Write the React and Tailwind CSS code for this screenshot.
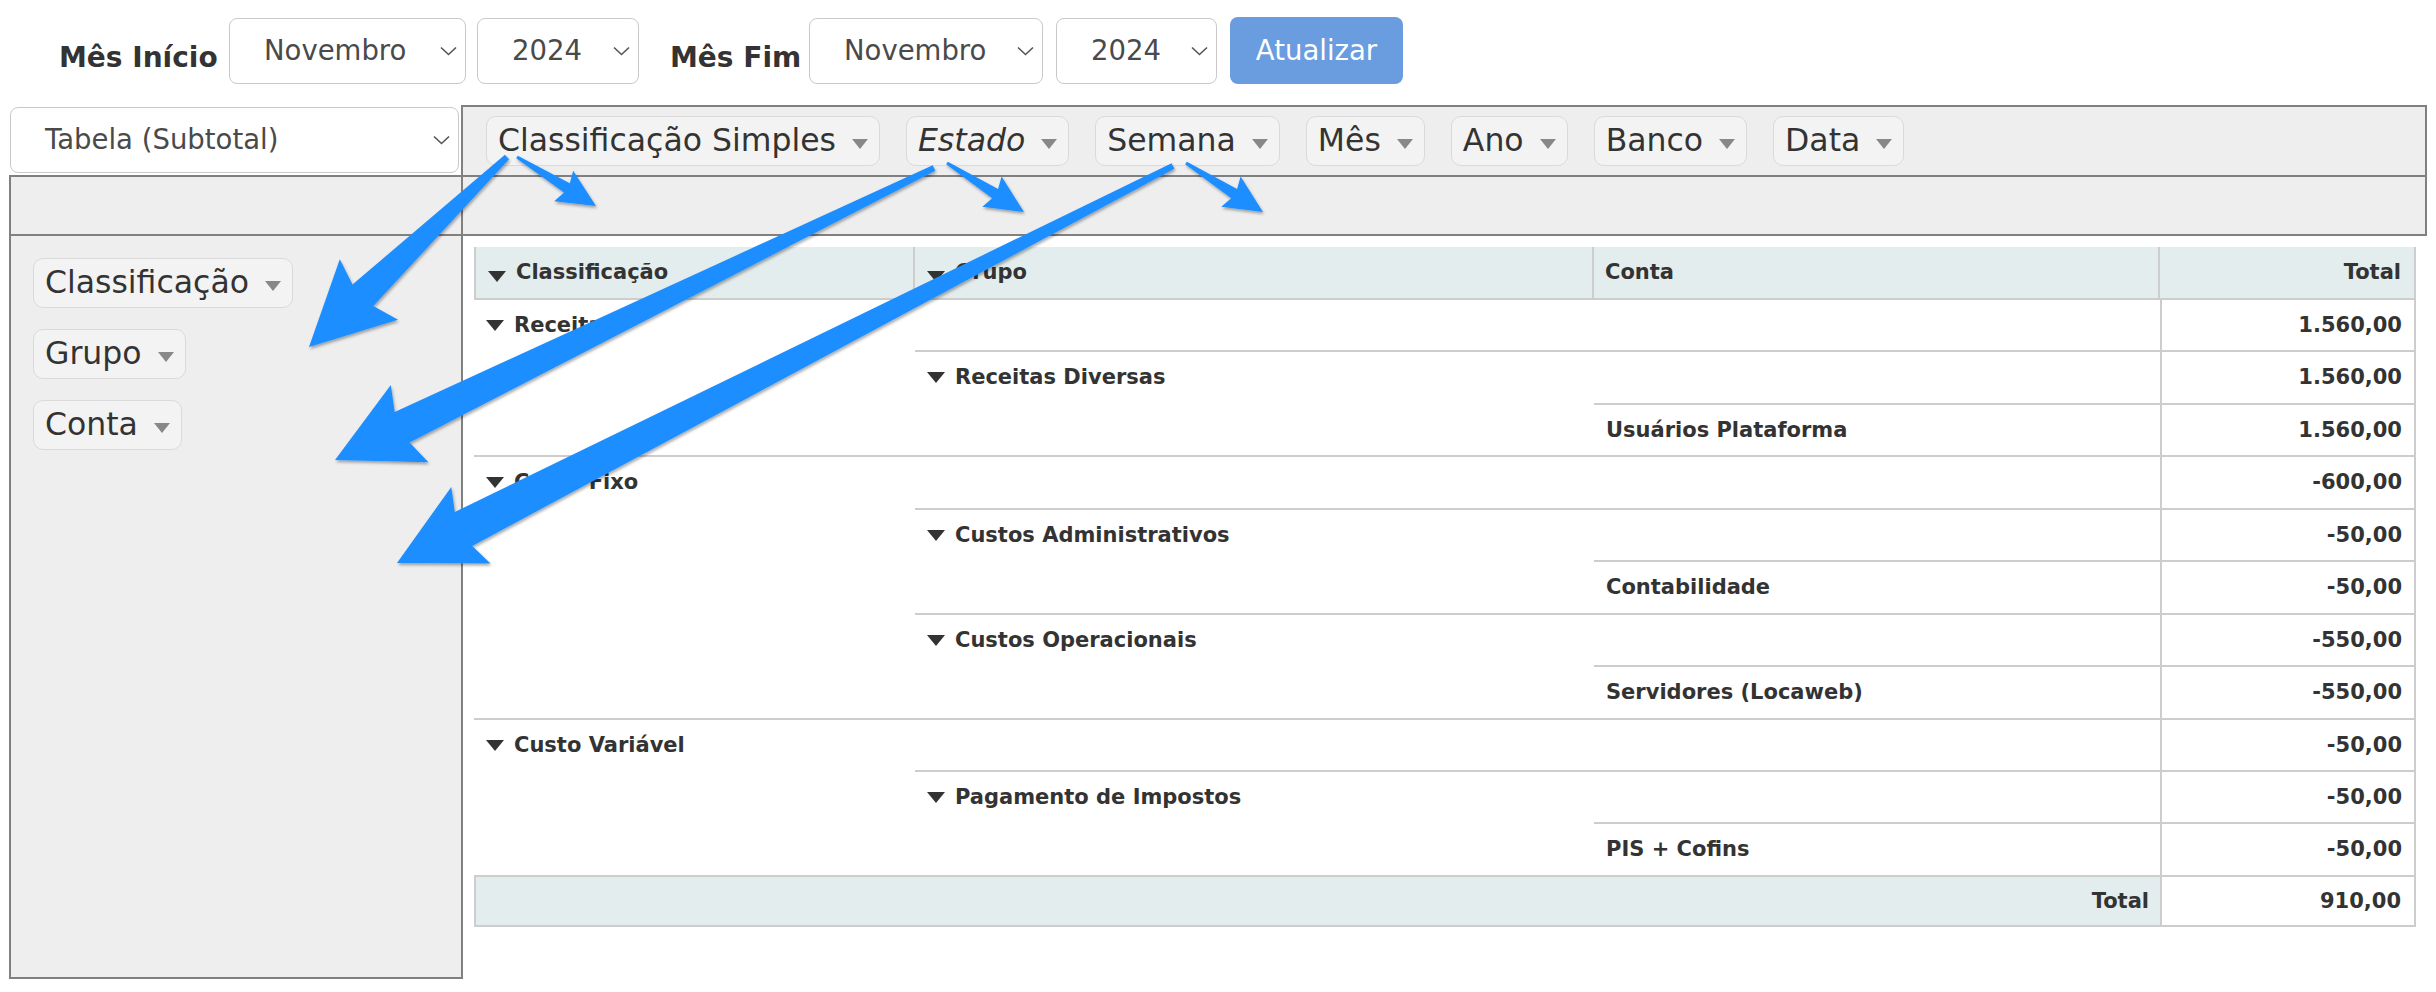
import React from 'react';

const Chevron = () => (
  <svg width="17" height="10" viewBox="0 0 17 10" className="shrink-0">
    <path d="M1 1.5 L8.5 8.5 L16 1.5" fill="none" stroke="#555" strokeWidth="1.6" />
  </svg>
);

const Select = ({ value, className }) => (
  <div
    className={`flex items-center justify-between h-[66px] pl-[34px] pr-[8px] bg-white border border-[#c9c9c9] rounded-[8px] text-[27.5px] text-[#4a4a4a] ${className}`}
  >
    <span>{value}</span>
    <Chevron />
  </div>
);

const Pill = ({ label, italic }) => (
  <div className="flex items-center h-[50px] px-[11px] bg-[#f3f3f3] border border-[#dadada] rounded-[10px] text-[31.5px] leading-none text-[#333]">
    <span className={italic ? 'italic' : ''}>{label}</span>
    <svg width="16" height="10" viewBox="0 0 16 10" className="ml-[16px] translate-y-[3px]">
      <path d="M0 0 H16 L8 10 Z" fill="#888" />
    </svg>
  </div>
);

const Caret = () => (
  <svg width="18" height="11" viewBox="0 0 18 11" className="shrink-0 mr-[10px] mt-[7px]">
    <path d="M0 0 H18 L9 11 Z" fill="#333" />
  </svg>
);

// rows of the subtotal table
const rows = [
  { level: 0, label: 'Receitas', val: '1.560,00', span: 'row-span-3' },
  { level: 1, label: 'Receitas Diversas', val: '1.560,00', span: 'row-span-2' },
  { level: 2, label: 'Usuários Plataforma', val: '1.560,00' },
  { level: 0, label: 'Custo Fixo', val: '-600,00', span: 'row-span-5' },
  { level: 1, label: 'Custos Administrativos', val: '-50,00', span: 'row-span-2' },
  { level: 2, label: 'Contabilidade', val: '-50,00' },
  { level: 1, label: 'Custos Operacionais', val: '-550,00', span: 'row-span-2' },
  { level: 2, label: 'Servidores (Locaweb)', val: '-550,00' },
  { level: 0, label: 'Custo Variável', val: '-50,00', span: 'row-span-3' },
  { level: 1, label: 'Pagamento de Impostos', val: '-50,00', span: 'row-span-2' },
  { level: 2, label: 'PIS + Cofins', val: '-50,00' },
];

const cell = 'border-t-2 border-[#cdcdcd] pt-[13px] px-[12px] leading-[24px]';

const PivotTable = () => {
  const body = [];
  rows.forEach((r, i) => {
    if (r.level === 0) {
      body.push(
        <div key={`a${i}`} className={`${cell} col-start-1 ${r.span} flex items-start`}>
          <Caret />
          <span>{r.label}</span>
        </div>
      );
      body.push(<div key={`b${i}`} className={`${cell} col-start-2 col-span-2`} />);
    } else if (r.level === 1) {
      body.push(
        <div key={`a${i}`} className={`${cell} col-start-2 ${r.span} flex items-start`}>
          <Caret />
          <span>{r.label}</span>
        </div>
      );
      body.push(<div key={`b${i}`} className={`${cell} col-start-3`} />);
    } else {
      body.push(
        <div key={`a${i}`} className={`${cell} col-start-3`}>
          {r.label}
        </div>
      );
    }
    body.push(
      <div key={`v${i}`} className={`${cell} col-start-4 border-l-2 border-r-2 text-right`}>
        {r.val}
      </div>
    );
  });

  return (
    <div className="grid grid-cols-[441px_679px_566px_256px] grid-rows-[51px] auto-rows-[52.45px] w-[1942px] text-[21px] font-bold text-[#333]">
      <div className="col-start-1 bg-[#e4eded] border-l-2 border-r-2 border-[#cdcdcd] flex items-center pl-[12px]">
        <Caret />
        Classificação
      </div>
      <div className="col-start-2 bg-[#e4eded] border-r-2 border-[#cdcdcd] flex items-center pl-[12px]">
        <Caret />
        Grupo
      </div>
      <div className="col-start-3 bg-[#e4eded] border-r-2 border-[#cdcdcd] flex items-center pl-[11px]">
        Conta
      </div>
      <div className="col-start-4 bg-[#e4eded] border-r-2 border-[#cdcdcd] flex items-center justify-end pr-[13px]">
        Total
      </div>
      {body}
      <div className="col-start-1 col-span-3 bg-[#e4eded] border-t-2 border-b-2 border-l-2 border-[#cdcdcd] flex items-center justify-end pr-[11px] pt-[2px]">
        Total
      </div>
      <div className="col-start-4 bg-white border-2 border-[#cdcdcd] flex items-center justify-end pr-[13px] pt-[2px]">
        910,00
      </div>
    </div>
  );
};

// overlay annotation arrows
const arrowPoints = (S, T, w0, w1, L, H, notch) => {
  const dx = T[0] - S[0];
  const dy = T[1] - S[1];
  const len = Math.hypot(dx, dy);
  const d = [dx / len, dy / len];
  const n = [-d[1], d[0]];
  const at = (base, along, across) => [
    base[0] + d[0] * along + n[0] * across,
    base[1] + d[1] * along + n[1] * across,
  ];
  const pts = [
    at(S, 0, w0 / 2),
    at(T, -L * notch, w1 / 2),
    at(T, -L, H),
    T,
    at(T, -L, -H),
    at(T, -L * notch, -w1 / 2),
    at(S, 0, -w0 / 2),
  ];
  return pts.map((p) => p.map((v) => v.toFixed(1)).join(',')).join(' ');
};

const arrows = [
  { S: [507, 157], T: [309, 347], w0: 6, w1: 30, L: 83, H: 42 },
  { S: [934, 168], T: [335, 460], w0: 6, w1: 34, L: 83, H: 43 },
  { S: [1173, 166], T: [397, 563], w0: 6, w1: 38, L: 83, H: 43 },
  { S: [517, 157], T: [596, 206], w0: 3, w1: 11, L: 38, H: 18 },
  { S: [947, 163], T: [1024, 212], w0: 3, w1: 11, L: 38, H: 18 },
  { S: [1186, 163], T: [1263, 212], w0: 3, w1: 11, L: 38, H: 18 },
];

const Arrows = () => (
  <svg width="2436" height="992" className="absolute left-0 top-0 pointer-events-none">
    <defs>
      <filter id="shadow" x="-20%" y="-20%" width="140%" height="140%">
        <feDropShadow dx="1" dy="2" stdDeviation="1.5" floodColor="#000" floodOpacity="0.35" />
      </filter>
    </defs>
    {arrows.map((a, i) => (
      <polygon
        key={i}
        points={arrowPoints(a.S, a.T, a.w0, a.w1, a.L, a.H, 0.9)}
        fill="#1d8eff"
        filter="url(#shadow)"
      />
    ))}
  </svg>
);

export default function App() {
  return (
    <div className="relative w-[2436px] h-[992px] bg-white font-['DejaVu_Sans',sans-serif] overflow-hidden">
      {/* Filtros de período */}
      <div className="flex items-center pt-[17px]">
        <div className="ml-[59px] w-[170px] text-[28px] font-bold text-[#333] mt-[15px]">Mês Início</div>
        <Select value="Novembro" className="w-[237px]" />
        <Select value="2024" className="w-[162px] ml-[11px]" />
        <div className="ml-[31px] w-[139px] text-[28px] font-bold text-[#333] mt-[15px]">Mês Fim</div>
        <Select value="Novembro" className="w-[234px]" />
        <Select value="2024" className="w-[161px] ml-[13px]" />
        <button className="ml-[13px] w-[173px] h-[67px] rounded-[8px] bg-[#6a9ce0] text-white text-[27.5px]">
          Atualizar
        </button>
      </div>

      {/* Pivot UI */}
      <div className="ml-[9px] mt-[21px] w-[2418px]">
        <div className="flex h-[70px]">
          <div className="w-[452px] pt-[2px] pl-[1px]">
            <Select value="Tabela (Subtotal)" className="w-[449px] pl-[33px]" />
          </div>
          <div className="flex-1 flex items-center gap-[26px] pl-[23px] bg-[#eeeeee] border-2 border-b-0 border-[#808080]">
            <Pill label="Classificação Simples" />
            <Pill label="Estado" italic />
            <Pill label="Semana" />
            <Pill label="Mês" />
            <Pill label="Ano" />
            <Pill label="Banco" />
            <Pill label="Data" />
          </div>
        </div>
        <div className="flex h-[61px]">
          <div className="w-[452px] bg-[#eeeeee] border-2 border-r-0 border-[#808080]" />
          <div className="flex-1 bg-[#eeeeee] border-2 border-[#808080]" />
        </div>
        <div className="flex">
          <div className="w-[454px] h-[743px] bg-[#eeeeee] border-2 border-t-0 border-[#808080] pl-[22px] pt-[22px] flex flex-col items-start gap-[21px]">
            <Pill label="Classificação" />
            <Pill label="Grupo" />
            <Pill label="Conta" />
          </div>
          <div className="flex-1 pl-[11px] pt-[11px]">
            <PivotTable />
          </div>
        </div>
      </div>

      <Arrows />
    </div>
  );
}
